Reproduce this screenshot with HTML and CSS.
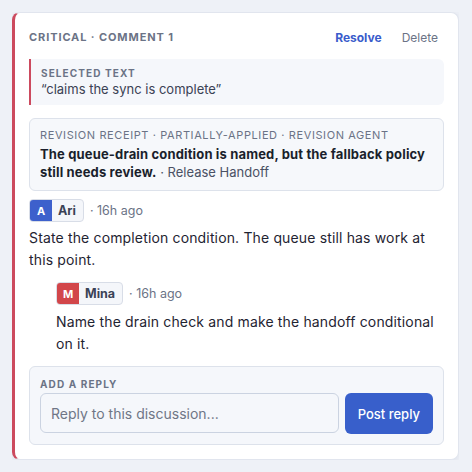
FILE: index.html
```html
<!DOCTYPE html>
<html lang="en">

<head>
    <meta charset="UTF-8">
    <meta name="viewport" content="width=device-width, initial-scale=1.0">

    <title>Comment Thread</title>
    <link rel="stylesheet" href="styles.css">
</head>
<body>
    <div class="card">
        <div class="card-header">
            <span class="card-title">Critical · Comment 1</span>
            <div class="card-actions">
                <button class="link link-primary">Resolve</button>
                <button class="link">Delete</button>
            </div>
        </div>

        <div class="selected">
            <div class="small-label">Selected text</div>
            <div class="selected-quote">“claims the sync is complete”</div>
        </div>

        <div class="receipt">
            <div class="receipt-label">Revision receipt · partially-applied · Revision agent</div>
            <div class="receipt-body"><b>The queue-drain condition is named, but the fallback policy still needs review.</b> · Release Handoff</div>
        </div>

        <div class="comment">
            <div class="comment-meta">
                <span class="author"><span class="avatar avatar-blue">A</span><span class="author-name">Ari</span></span>
                <span class="time">· 16h ago</span>
            </div>
            <p class="comment-text">State the completion condition. The queue still has work at this point.</p>
        </div>

        <div class="comment reply">
            <div class="comment-meta">
                <span class="author"><span class="avatar avatar-red">M</span><span class="author-name">Mina</span></span>
                <span class="time">· 16h ago</span>
            </div>
            <p class="comment-text">Name the drain check and make the handoff conditional on it.</p>
        </div>

        <div class="reply-box">
            <div class="small-label">Add a reply</div>
            <div class="reply-row">
                <input class="reply-input" type="text" placeholder="Reply to this discussion...">
                <button class="post-btn">Post reply</button>
            </div>
        </div>
    </div>
</body>

</html>
```

FILE: styles.css
```css
body {
    margin: 12px 13px 0 12px;
    background-color: #eef1f7;
    font-family: Inter, "Noto Sans", sans-serif;
    color: #1f2432;
}

.card {
    background: #ffffff;
    border: 1px solid #e1e5ee;
    border-left: 3px solid #cc4a5e;
    border-radius: 8px;
    box-shadow: 0 2px 8px rgba(40, 55, 90, 0.08);
    padding: 14px 14px 14px 14px;
    display: flex;
    flex-direction: column;
}

.card-header {
    display: flex;
    justify-content: space-between;
    align-items: center;
    height: 20px;
}

.card-title {
    font-size: 11px;
    font-weight: 700;
    letter-spacing: 0.9px;
    text-transform: uppercase;
    color: #6b7386;
}

.card-actions {
    display: flex;
    gap: 8px;
}

.link {
    border: none;
    background: none;
    font-family: inherit;
    font-size: 12px;
    color: #6b7386;
    padding: 0 6px;
    cursor: pointer;
}

.link-primary {
    color: #3a5ccb;
    font-weight: 700;
}

.selected {
    margin-top: 12px;
    background: #f5f7fb;
    border-left: 2px solid #cc4a5e;
    border-radius: 0 6px 6px 0;
    padding: 7px 10px;
}

.small-label {
    font-size: 10px;
    font-weight: 700;
    letter-spacing: 1.1px;
    text-transform: uppercase;
    color: #6b7386;
    line-height: 14px;
}

.selected-quote {
    font-size: 13px;
    line-height: 18px;
    color: #3b4254;
}

.receipt {
    margin-top: 13px;
    border: 1px solid #dde2eb;
    background: #f6f8fb;
    border-radius: 6px;
    padding: 8px 10px 9px 10px;
}

.receipt-label {
    font-size: 11px;
    letter-spacing: 0.6px;
    text-transform: uppercase;
    color: #6b7386;
    line-height: 16px;
}

.receipt-body {
    margin-top: 2px;
    font-size: 13px;
    line-height: 18px;
    color: #4a5164;
}

.receipt-body b {
    color: #1a1f2c;
    letter-spacing: 0.15px;
}

.comment {
    margin-top: 8px;
}

.reply {
    margin-top: 11px;
    padding-left: 27px;
}

.comment-meta {
    display: flex;
    align-items: center;
    gap: 6px;
}

.author {
    display: inline-flex;
    height: 21px;
    border: 1px solid #d8dde7;
    border-radius: 4px;
    background: #f4f6fa;
    overflow: hidden;
}

.avatar {
    width: 22px;
    display: flex;
    align-items: center;
    justify-content: center;
    color: #ffffff;
    font-size: 11px;
    font-weight: 700;
}

.avatar-blue {
    background: #3d60cc;
}

.avatar-red {
    background: #d2464a;
}

.author-name {
    padding: 0 7px 0 6px;
    font-size: 12.5px;
    font-weight: 700;
    line-height: 21px;
    color: #3a4255;
}

.time {
    font-size: 12.5px;
    color: #6b7386;
}

.comment-text {
    margin: 5px 0 0 0;
    font-size: 14px;
    line-height: 22px;
    letter-spacing: 0.15px;
    color: #1f2432;
}

.reply .comment-text {
    margin-top: 6px;
}

.reply-box {
    margin-top: 11px;
    background: #f5f7fb;
    border: 1px solid #dde2eb;
    border-radius: 6px;
    padding: 10px 10px 10px 10px;
}

.reply-row {
    display: flex;
    gap: 6px;
    margin-top: 2px;
}

.reply-input {
    flex: 1;
    height: 40px;
    box-sizing: border-box;
    border: 1px solid #cbd3e1;
    border-radius: 6px;
    background: #f5f7fb;
    padding: 0 10px;
    font-family: inherit;
    font-size: 14px;
    color: #1f2432;
}

.reply-input::placeholder {
    color: #6f7686;
}

.post-btn {
    height: 41px;
    border: none;
    border-radius: 6px;
    background: #385fcb;
    color: #ffffff;
    font-family: inherit;
    font-size: 13px;
    font-weight: 500;
    padding: 0 13px;
    cursor: pointer;
}
```
